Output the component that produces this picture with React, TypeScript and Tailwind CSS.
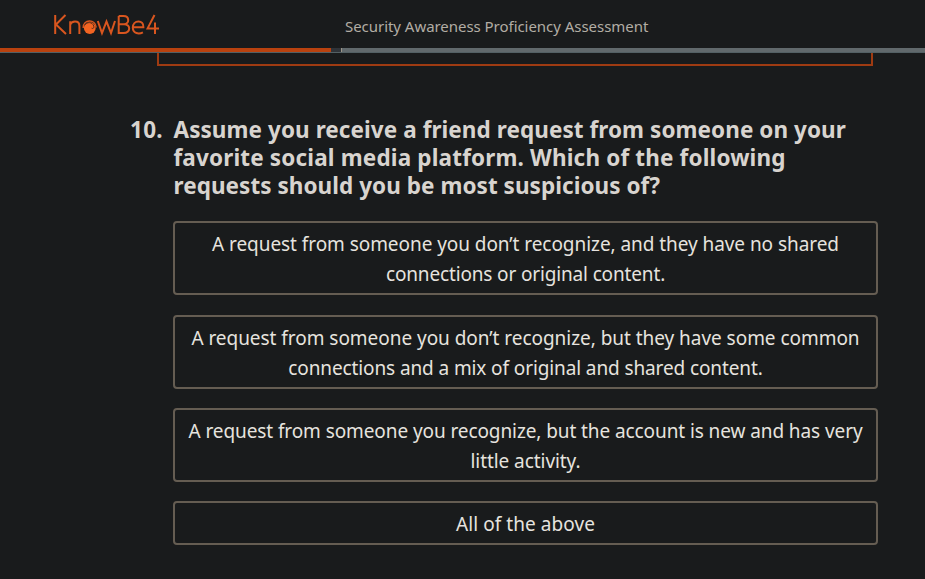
import React from "react";

type Line = { text: string; spacing: string };

const question: Line[] = [
  { text: "Assume you receive a friend request from someone on your", spacing: "tracking-[0.07px]" },
  { text: "favorite social media platform. Which of the following", spacing: "tracking-[0.16px]" },
  { text: "requests should you be most suspicious of?", spacing: "tracking-[0.05px]" },
];

const options: { gap: string; lines: Line[] }[] = [
  {
    gap: "mt-0",
    lines: [
      { text: "A request from someone you don’t recognize, and they have no shared", spacing: "tracking-[-0.06px]" },
      { text: "connections or original content.", spacing: "tracking-[-0.15px]" },
    ],
  },
  {
    gap: "mt-5",
    lines: [
      { text: "A request from someone you don’t recognize, but they have some common", spacing: "tracking-[-0.04px]" },
      { text: "connections and a mix of original and shared content.", spacing: "tracking-[-0.11px]" },
    ],
  },
  {
    gap: "mt-[19px]",
    lines: [
      { text: "A request from someone you recognize, but the account is new and has very", spacing: "tracking-[-0.09px]" },
      { text: "little activity.", spacing: "tracking-[-0.07px]" },
    ],
  },
  { gap: "mt-[19px]", lines: [{ text: "All of the above", spacing: "tracking-[0.06px]" }] },
];

function Logo() {
  return (
    <svg width="112" height="30" viewBox="0 0 112 30" className="block" aria-label="KnowBe4">
      <g fill="none" stroke="#d9561f" strokeWidth="2">
        <path d="M4.2 5V24M14.5 5L5 14.5L15 24" />
        <path d="M19.2 24V11.2M19.2 14.8C20 12.4 22 11.6 24 11.6C27 11.6 28.4 13 28.4 16V24" />
        <path d="M46.8 11L51 23L55.5 11.5L60 23L64 11" />
        <path d="M67.7 6V23H72.5C80 23 80 14.2 73 14.2H67.7M73 14.2C78.7 14.2 78.7 6 72.5 6H67.7" />
        <path d="M82 17.2H92.4C92.6 13.5 90.5 11.4 87.5 11.4C84.2 11.4 81.8 13.8 81.8 17.6C81.8 23.8 88 24.4 91.9 22.3" />
        <path d="M103.5 5L96.6 18.4H108M104 12.5V24" />
      </g>
      <circle cx="38.8" cy="18" r="5.9" fill="#f26422" />
      <path d="M32.2 18C32 9 44.6 8.5 45.2 17.5" fill="none" stroke="#d9561f" strokeWidth="1.5" />
      <path d="M33.6 15.2C36 11.5 41.5 11.7 42.8 16.2C43.2 18 42 19 40.6 18.2" fill="none" stroke="#4a2719" strokeWidth="0.9" />
    </svg>
  );
}

function TextLine({ line }: { line: Line }) {
  return <span className={`block whitespace-nowrap ${line.spacing}`}>{line.text}</span>;
}

export default function App() {
  return (
    <div className="h-[579px] w-[925px] overflow-hidden bg-[#191b1c] font-['Noto_Sans','Open_Sans',sans-serif]">
      <header className="flex h-12 items-start">
        <div className="w-[345px] pt-[10px] pl-[51px]"><Logo /></div>
        <h1 className="pt-[14px] text-[15px] leading-6 whitespace-nowrap text-[#b2ada4]">
          <span className="block tracking-[-0.04px]">Security Awareness Proficiency Assessment</span>
        </h1>
      </header>
      <div className="flex h-[5px] border-b border-[#536064] bg-[#61696c]">
        <div className="w-[331px] bg-[#b9420f]" />
        <div className="w-[10px] bg-[#303439]" />
        <div className="w-px bg-[#9a9488]" />
      </div>
      <main>
        <div className="ml-[157px] h-[13px] w-[716px] border-x-2 border-b-2 border-[#9f3b12]" />
        <h2 className="mt-[50px] flex text-[22.5px] leading-7 font-bold text-[#d8d4cf]">
          <span className="w-[173.5px] pl-[130px] tracking-[0.3px]">10.</span>
          <span>{question.map((line) => <TextLine key={line.text} line={line} />)}</span>
        </h2>
        <div className="mt-[21px] ml-[173px] flex w-[705px] flex-col">
          {options.map(({ gap, lines }) => (
            <button key={lines[0].text} className={`flex flex-col items-center rounded-[4px] border-2 border-[#655d52] pt-1.5 pb-1 text-[19px] leading-[30px] text-[#e6e3df] ${gap}`}>
              {lines.map((line) => <TextLine key={line.text} line={line} />)}
            </button>
          ))}
        </div>
      </main>
    </div>
  );
}
